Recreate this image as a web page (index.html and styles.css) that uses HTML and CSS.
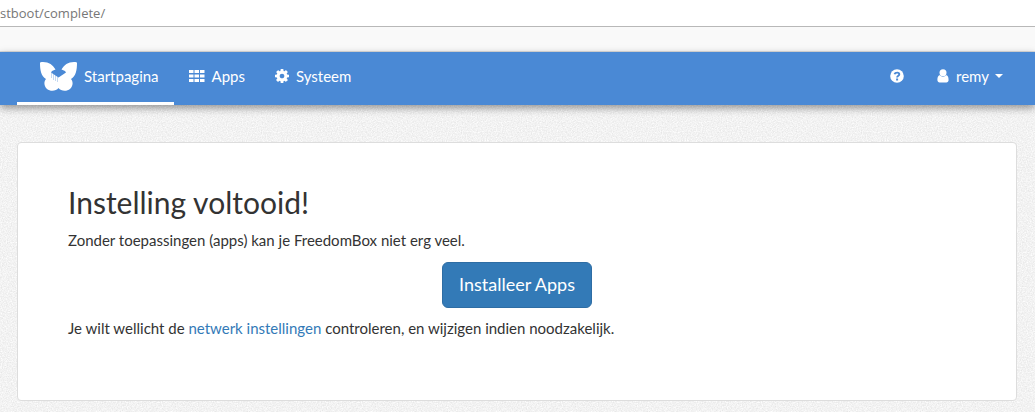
FILE: index.html
```
<!DOCTYPE html>
<html lang="nl">
<head>
<meta charset="utf-8">
<title>Instelling voltooid!</title>
<link rel="stylesheet" href="styles.css">
</head>
<body>
<div class="address-bar">
  <input class="address-input" type="text" aria-label="Adres" value="stboot/complete/">
</div>
<div class="toolbar"></div>
<nav class="navbar">
  <a class="nav-link brand active" href="#">
    <svg class="logo" viewBox="0 0 37 29" aria-hidden="true">
      <path fill="#fff" d="M0 1C0 0 1 0 3 0 9 0 13 3 15.500 7.500L12 9 11 10.500 18.500 15.500 26 10.500 25 9 21.500 7.500C24 3 28 0 34 0c2 0 3 0 3 1 0 7-1 13-6 16 2.500 3 2 7-1 10-3 2.500-9 2.500-11.500-1C16 29.500 10 29.500 7 27c-3-3-3.500-7-1-10C1 14 0 8 0 1z"/>
      <path stroke="#4a89d5" stroke-width=".8" opacity=".4" d="M11.500 11v5M13.500 12v6M15.500 13v6M17.500 15v5"/>
    </svg>
    <span>Startpagina</span>
  </a>
  <a class="nav-link" href="#">
    <svg class="icon-grid" viewBox="0 0 16 12" aria-hidden="true"><path fill="#fff" d="M0 0h4.500v3H0zM5.500 0H10v3H5.500zM11 0h4.500v3H11zM0 4.500h4.500v3H0zM5.500 4.500H10v3H5.500zM11 4.500h4.500v3H11zM0 9h4.500v3H0zM5.500 9H10v3H5.500zM11 9h4.500v3H11z"/></svg>
    <span>Apps</span>
  </a>
  <a class="nav-link" href="#">
    <svg class="icon" viewBox="0 0 1536 1536" aria-hidden="true"><path fill="#fff" d="M1024 768q0-106-75-181t-181-75-181 75-75 181 75 181 181 75 181-75 75-181zm512-109v222q0 12-8 23t-20 13l-185 28q-19 54-39 91 35 50 107 138 10 12 10 25t-9 23q-27 37-99 108t-94 71q-12 0-26-9l-138-108q-44 23-91 38-16 136-29 186-7 28-36 28H657q-14 0-24.500-8.500T621 1506l-28-184q-49-16-90-37l-141 107q-10 9-25 9-14 0-25-11-126-114-165-168-7-10-7-23 0-12 8-23 15-21 51-66.500t54-70.500q-27-50-41-99L29 913q-13-2-21-12.500T0 877V655q0-12 8-23t19-13l186-28q14-46 39-92-40-57-107-138-10-12-10-24 0-10 9-23 26-36 98.500-107.500T337 135q13 0 26 10l138 107q44-23 91-38 16-136 29-186 7-28 36-28h222q14 0 24.500 8.500T915 30l28 184q49 16 90 37l142-107q9-9 24-9 13 0 25 10 129 119 165 170 7 8 7 22 0 12-8 23-15 21-51 66.500t-54 70.500q26 50 41 98l183 28q13 2 21 12.500t8 23.500z"/></svg>
    <span>Systeem</span>
  </a>
  <a class="nav-link nav-help" href="#" aria-label="Help">
    <svg class="icon" viewBox="0 0 14 14" aria-hidden="true"><circle cx="7" cy="7" r="6.800" fill="#fff"/><path fill="none" stroke="#4a89d5" stroke-width="1.900" d="M4.500 5.300C5.200 3 9.300 3 9.300 5.300 9.300 6.800 7.100 6.700 7.100 8.600"/><path fill="#4a89d5" d="M6.100 9.500h2v2h-2z"/></svg>
  </a>
  <button class="nav-link" type="button" aria-haspopup="true">
    <svg class="icon-user" viewBox="0 0 12 14" aria-hidden="true"><circle cx="6" cy="3.700" r="3.500" fill="#fff"/><path fill="#fff" d="M2.800 6.300C4.500 8.200 7.500 8.200 9.200 6.300 11 6.300 11.600 9 11.600 11c0 1.500-1 2.400-2.200 2.400H2.600C1.400 13.400.4 12.500.4 11c0-2 .6-4.700 2.400-4.700z"/></svg>
    <span>remy</span>
    <span class="caret"></span>
  </button>
</nav>
<main class="card">
  <h2 class="title">Instelling voltooid!</h2>
  <p class="text">Zonder toepassingen (apps) kan je FreedomBox niet erg veel.</p>
  <p class="actions"><a class="button" href="#">Installeer Apps</a></p>
  <p class="text">Je wilt wellicht de <a class="link" href="#">netwerk instellingen</a> controleren, en wijzigen indien noodzakelijk.</p>
</main>
</body>
</html>
```
FILE: styles.css
```
* {
  box-sizing: border-box;
}

body {
  margin: 0;
  font: 15px/20px Lato, sans-serif;
  color: #333;
  background: #f2f2f2 url("data:image/svg+xml,%3Csvg xmlns='http://www.w3.org/2000/svg' width='200' height='200'%3E%3Cfilter id='n' x='0' y='0' width='1' height='1' color-interpolation-filters='sRGB'%3E%3CfeTurbulence type='fractalNoise' baseFrequency='.8' numOctaves='2' stitchTiles='stitch'/%3E%3CfeColorMatrix values='.14 0 0 0 .88 .14 0 0 0 .88 .14 0 0 0 .88 0 0 0 0 1'/%3E%3C/filter%3E%3Crect width='200' height='200' filter='url(%23n)'/%3E%3C/svg%3E");
}

.address-bar {
  height: 27px;
  background: #fff;
  border-bottom: 1px solid #b8b8b8;
}

.address-input {
  display: block;
  width: 100%;
  height: 26px;
  padding: 0;
  border: 0;
  background: transparent;
  font: 13px/26px "Open Sans", sans-serif;
  color: #777;
}

.toolbar {
  height: 25px;
  background: #f9f9f9;
  border-bottom: 1px solid #dedede;
}

.navbar {
  display: flex;
  height: 53px;
  padding: 0 17px;
  background: #4a89d5;
  box-shadow: 0 3px 8px rgba(0, 0, 0, 0.4);
}

.nav-link {
  display: flex;
  align-items: center;
  gap: 7px;
  padding: 0 15px 2px;
  border: 0;
  border-bottom: 3px solid transparent;
  background: transparent;
  font: inherit;
  color: #fff;
  text-decoration: none;
}

.brand {
  padding-left: 23px;
}

.active {
  border-bottom-color: #fff;
}

.nav-help {
  margin-left: auto;
  padding-right: 18px;
}

.logo {
  width: 37px;
  height: 29px;
}

.icon {
  width: 14px;
  height: 14px;
}

.icon-grid {
  width: 16px;
  height: 12px;
}

.icon-user {
  width: 12px;
  height: 14px;
}

.caret {
  margin-left: -1px;
  border: 4px solid transparent;
  border-top-color: #fff;
  border-bottom: 0;
}

.card {
  min-height: 259px;
  margin: 37px 18px 11px 17px;
  padding: 43px 50px;
  background: #fff;
  border: 1px solid #ddd;
  border-radius: 4px;
}

.title {
  margin: 0 0 11px;
  font-size: 30px;
  line-height: 33px;
  font-weight: 400;
}

.text {
  margin: 0 0 12px;
}

.actions {
  margin: 0 0 10px;
  text-align: center;
}

.button {
  display: inline-block;
  padding: 9px 16px 11px;
  border: 1px solid #2e6da4;
  border-radius: 6px;
  background: #337ab7;
  font-size: 18px;
  line-height: 24px;
  color: #fff;
  text-decoration: none;
}

.link {
  color: #337ab7;
  text-decoration: none;
}
```
